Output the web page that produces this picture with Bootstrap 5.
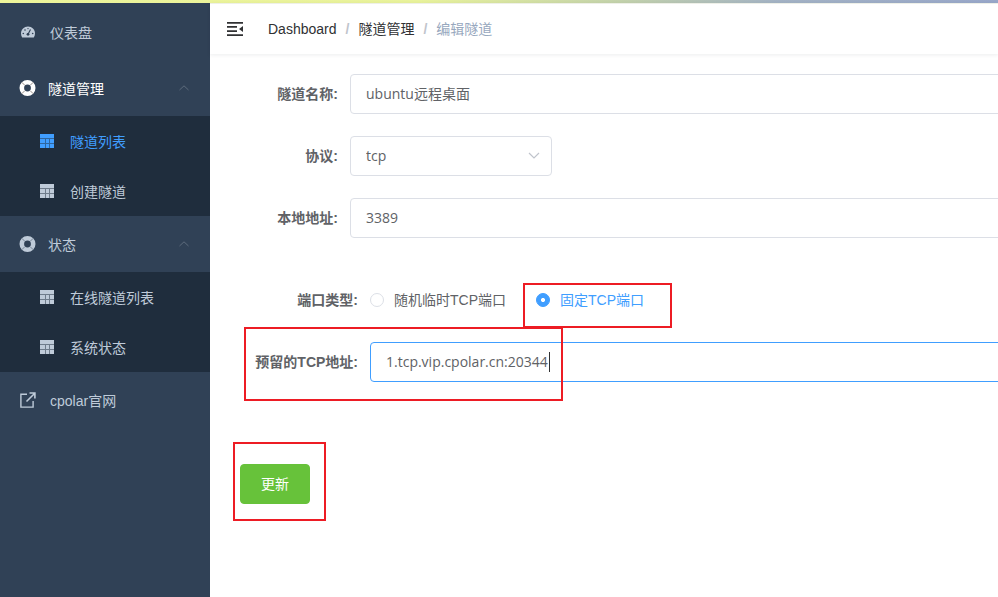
<!DOCTYPE html>
<html lang="zh-CN">
<head>
<meta charset="utf-8">
<title>编辑隧道</title>
<link href="https://cdn.jsdelivr.net/npm/bootstrap@5.3.0/dist/css/bootstrap.min.css" rel="stylesheet">
<style>
html,body{height:597px;overflow:hidden}
body{font-family:"Liberation Sans","Noto Sans CJK SC",sans-serif;font-size:14px;color:#606266;position:relative;background:#fff}
.topband{height:3px;background:linear-gradient(90deg,#eef59a 0,#e8f29b 42%,#c3d2ab 62%,#a3b2c4 78%,#98a7c9 100%)}
.shell{height:594px}
.side{width:210px;flex:none;background:#304156;color:#bfcbd9}
.side-item{height:56px;padding-left:20px;gap:14px;color:#bfcbd9}
.side-item.first{height:57px;padding-top:1px}
.side-item.open{gap:12px;padding-left:19px}
.side-item span{padding-top:2px}
.side-item .chev{margin-left:auto;margin-right:20px}
.side-item.current{color:#fff}
.subgroup{background:#1f2d3d}
.sub-item{height:50px;padding-left:40px;gap:16px;color:#bfcbd9}
.sub-item span{padding-top:2px}
.sub-item.current{color:#409eff}
.gridlines{fill:#1f2d3d;fill-opacity:.5}
.mainpane{min-width:0}
.topnav{height:51px;flex:none;padding-left:17px;padding-top:1px;box-shadow:0 1px 4px rgba(0,21,41,.08);background:#fff;position:relative;border-top:1px solid #eef0e8}
.navtoggle{margin-bottom:2px}
.topnav .breadcrumb{margin:0 0 0 25px;--bs-breadcrumb-item-padding-x:9px;font-size:14px}
.topnav .breadcrumb-item{color:#303133}
.topnav .breadcrumb-item+.breadcrumb-item::before{font-weight:700;color:#c0c4cc}
.topnav .breadcrumb-item.active{color:#97a8be}
.formwrap{overflow:hidden;padding-top:20px;flex:1;min-width:0}
.frow{margin-bottom:22px;height:40px;display:flex;align-items:center}
.flabel{width:140px;flex:none;text-align:right;padding-right:12px;font-weight:700;color:#606266;margin:0}
.flabel.wide{width:160px}
.formwrap .form-control,.formwrap .form-select{height:40px;border:1px solid #dcdfe6;border-radius:4px;padding:0 15px 2px;font-size:14px;color:#606266;box-shadow:none;flex:none;font-family:"Open Sans","Noto Sans CJK SC",sans-serif}
.formwrap .form-control{width:760px}
.formwrap .form-select{width:202px;background-position:right 10px center;background-size:14px 10px;background-image:url("data:image/svg+xml,%3csvg xmlns='http://www.w3.org/2000/svg' viewBox='0 0 14 10'%3e%3cpath fill='none' stroke='%23c0c4cc' stroke-width='1.2' d='M2 2l5 5 5-5'/%3e%3c/svg%3e")}
.formwrap .form-control.active-field{border-color:#409eff}
.radiorow{margin-top:42px}
.radiogroup{gap:30px}
.formwrap .form-check{margin:0;padding:0;min-height:0;display:flex;align-items:center;gap:10px}
.formwrap .form-check-input{float:none;margin:0;width:14px;height:14px;border:1px solid #dcdfe6;background-color:#fff}
.formwrap .form-check-input:checked{background-color:#409eff;border-color:#409eff;background-image:radial-gradient(circle,#fff 0,#fff 1.8px,transparent 2.3px)}
.formwrap .form-check-label{color:#606266}
.formwrap .form-check-label.checked-label{color:#409eff}
.fieldbox{position:relative}
.caret-line{position:absolute;left:179px;top:10px;width:1px;height:20px;background:#303133}
.savewrap{padding:60px 0 0 30px}
.savebtn{width:70px;height:40px;padding:0;font-size:14px;border-radius:4px;background:#67c23a;border-color:#67c23a;color:#fff}
.redbox{position:absolute;border:2px solid #ed1c24;pointer-events:none}
.rb1{left:523px;top:283px;width:149px;height:45px}
.rb2{left:244px;top:327px;width:319px;height:74px}
.rb3{left:233px;top:442px;width:93px;height:79px}
</style>
</head>
<body>
<div class="topband"></div>
<div class="shell d-flex">
  <nav class="side d-flex flex-column">
    <a class="side-item first d-flex align-items-center text-decoration-none" href="#">
      <svg width="16" height="12" viewBox="0 0 16 12"><path fill="#bfcbd9" d="M2.200 11.500C1.400 10.200 1 8.800 1 7.500 1 3.400 4.100.5 8 .5s7 2.900 7 7c0 1.300-.4 2.700-1.200 4z"/><circle cx="8" cy="8.300" r="1.400" fill="#304156"/><path stroke="#304156" stroke-width="1.100" d="M8 8.300 10.500 3.500"/><g fill="#304156"><circle cx="3.300" cy="7.500" r=".8"/><circle cx="12.700" cy="7.500" r=".8"/><circle cx="5" cy="4" r=".8"/><circle cx="8" cy="2.600" r=".7"/></g></svg>
      <span>仪表盘</span>
    </a>
    <a class="side-item open current d-flex align-items-center text-decoration-none" href="#">
      <svg width="17" height="16" viewBox="0 0 17 16"><circle cx="8.500" cy="8" r="5.700" fill="none" stroke="#fff" stroke-width="4.600"/><path stroke="#8a7f78" stroke-width=".9" d="M2.800 2.300 5.700 5.200M14.200 2.300 11.300 5.200M2.800 13.700 5.700 10.800M14.200 13.700 11.300 10.800"/></svg>
      <span>隧道管理</span>
      <svg class="chev" width="12" height="8" viewBox="0 0 12 8"><path fill="none" stroke="#5d6b7c" stroke-width="1" d="M1.500 6 6 1.800 10.500 6"/></svg>
    </a>
    <div class="subgroup">
      <a class="sub-item current d-flex align-items-center text-decoration-none" href="#">
        <svg width="14" height="14" viewBox="0 0 14 14"><rect width="14" height="14" fill="#409eff"/><path class="gridlines" d="M0 4h14v1H0zM0 9h14v1H0zM5 5h1v9H5zM9 5h1v9H9z"/></svg>
        <span>隧道列表</span>
      </a>
      <a class="sub-item d-flex align-items-center text-decoration-none" href="#">
        <svg width="14" height="14" viewBox="0 0 14 14"><rect width="14" height="14" fill="#bfcbd9"/><path class="gridlines" d="M0 4h14v1H0zM0 9h14v1H0zM5 5h1v9H5zM9 5h1v9H9z"/></svg>
        <span>创建隧道</span>
      </a>
    </div>
    <a class="side-item open d-flex align-items-center text-decoration-none" href="#">
      <svg width="17" height="16" viewBox="0 0 17 16"><circle cx="8.500" cy="8" r="5.700" fill="none" stroke="#bfcbd9" stroke-width="4.600"/><path stroke="#6b7a8c" stroke-width=".9" d="M2.800 2.300 5.700 5.200M14.200 2.300 11.300 5.200M2.800 13.700 5.700 10.800M14.200 13.700 11.300 10.800"/></svg>
      <span>状态</span>
      <svg class="chev" width="12" height="8" viewBox="0 0 12 8"><path fill="none" stroke="#5d6b7c" stroke-width="1" d="M1.500 6 6 1.800 10.500 6"/></svg>
    </a>
    <div class="subgroup">
      <a class="sub-item d-flex align-items-center text-decoration-none" href="#">
        <svg width="14" height="14" viewBox="0 0 14 14"><rect width="14" height="14" fill="#bfcbd9"/><path class="gridlines" d="M0 4h14v1H0zM0 9h14v1H0zM5 5h1v9H5zM9 5h1v9H9z"/></svg>
        <span>在线隧道列表</span>
      </a>
      <a class="sub-item d-flex align-items-center text-decoration-none" href="#">
        <svg width="14" height="14" viewBox="0 0 14 14"><rect width="14" height="14" fill="#bfcbd9"/><path class="gridlines" d="M0 4h14v1H0zM0 9h14v1H0zM5 5h1v9H5zM9 5h1v9H9z"/></svg>
        <span>系统状态</span>
      </a>
    </div>
    <a class="side-item d-flex align-items-center text-decoration-none" href="#">
      <svg width="16" height="16" viewBox="0 0 16 16"><path fill="none" stroke="#bfcbd9" stroke-width="1.400" d="M7 2.200H.9v12.900h12.200V9"/><path fill="none" stroke="#bfcbd9" stroke-width="1.600" d="M6.500 9.500 14.300 1.700M9.500 1h5.400v5.400"/></svg>
      <span>cpolar官网</span>
    </a>
  </nav>
  <div class="mainpane flex-grow-1 d-flex flex-column">
    <header class="topnav d-flex align-items-center">
      <svg class="navtoggle" width="16" height="14" viewBox="0 0 16 14"><path fill="#303133" d="M0 0h16v1.800H0zM0 12.200h16V14H0zM0 4h10v1.800H0zM0 8.200h10V10H0zM16 4v6l-4-3z"/></svg>
      <ol class="breadcrumb">
        <li class="breadcrumb-item">Dashboard</li>
        <li class="breadcrumb-item">隧道管理</li>
        <li class="breadcrumb-item active">编辑隧道</li>
      </ol>
    </header>
    <form class="formwrap">
      <div class="frow"><label class="flabel">隧道名称:</label><input class="form-control" value="ubuntu远程桌面"></div>
      <div class="frow"><label class="flabel">协议:</label><select class="form-select"><option>tcp</option></select></div>
      <div class="frow"><label class="flabel">本地地址:</label><input class="form-control" value="3389"></div>
      <div class="frow radiorow"><label class="flabel wide">端口类型:</label>
        <div class="radiogroup d-flex align-items-center">
          <div class="form-check"><input class="form-check-input" type="radio" name="pt" id="r1"><label class="form-check-label" for="r1">随机临时TCP端口</label></div>
          <div class="form-check"><input class="form-check-input" type="radio" name="pt" id="r2" checked><label class="form-check-label checked-label" for="r2">固定TCP端口</label></div>
        </div>
      </div>
      <div class="frow"><label class="flabel wide">预留的TCP地址:</label><div class="fieldbox"><input class="form-control active-field" value="1.tcp.vip.cpolar.cn:20344"><span class="caret-line"></span></div></div>
      <div class="savewrap"><button type="button" class="btn savebtn">更新</button></div>
    </form>
  </div>
</div>
<div class="redbox rb1"></div>
<div class="redbox rb2"></div>
<div class="redbox rb3"></div>
<script src="https://cdn.jsdelivr.net/npm/bootstrap@5.3.0/dist/js/bootstrap.bundle.min.js"></script>
</body>
</html>
